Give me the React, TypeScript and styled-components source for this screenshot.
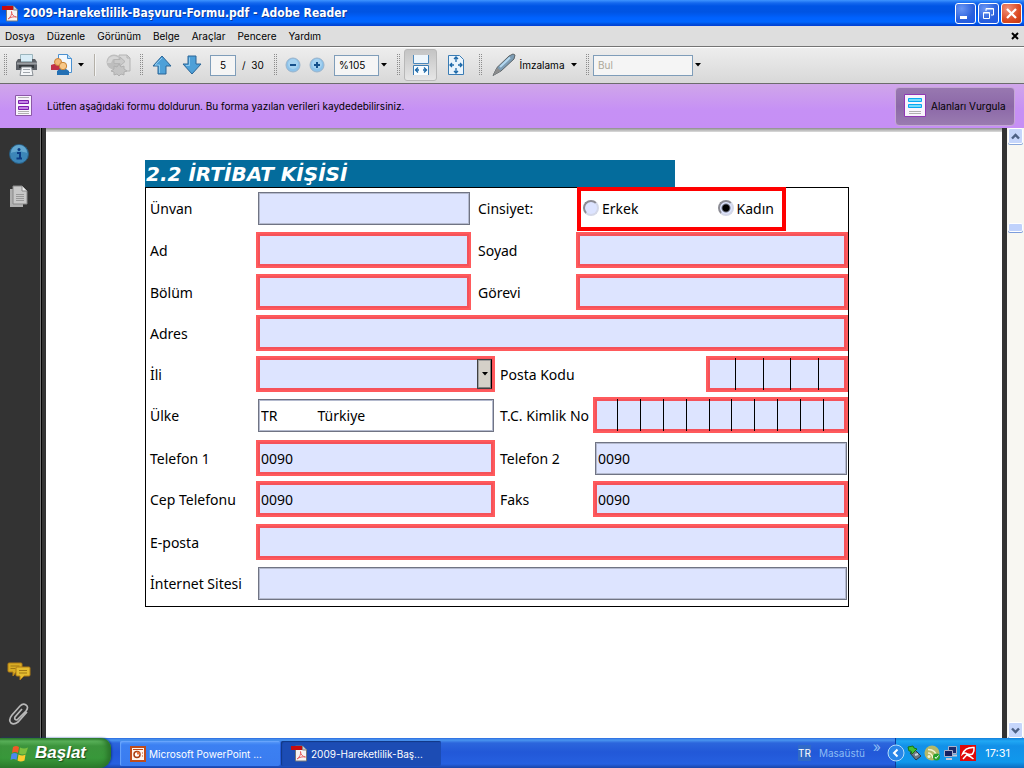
import React from "react";
import styled, { createGlobalStyle, css } from "styled-components";

const uiFont = `Inter, "DejaVu Sans Condensed", sans-serif`;
const captionFont = `"DejaVu Sans Condensed", "DejaVu Sans", sans-serif`;
const formFont = `"Noto Sans", "Open Sans", sans-serif`;

const GlobalStyle = createGlobalStyle`
  *, *::before, *::after { box-sizing: border-box; }
  body { margin: 0; background: #333; font-family: ${uiFont}; font-size: 10px; color: #000; }
  button, input, select { font: inherit; color: inherit; margin: 0; }
  button { padding: 0; border: 0; background: none; }
  svg { display: block; flex: none; }
`;

const Window = styled.div`
  display: flex;
  flex-direction: column;
  min-height: 100vh;
`;

/* ---------- title bar ---------- */
const TitleBar = styled.header`
  display: flex;
  align-items: center;
  height: 26px;
  padding: 0 2px;
  background: linear-gradient(#3f95ff 0, #1468ee 3px, #0055e5 6px, #0054e3 12px, #0062ff 18px, #0066ff 22px, #0050dc 24px, #003dd7 26px);
`;
const WindowTitle = styled.h1`
  flex: 1;
  margin: 0 0 0 4px;
  font-family: ${captionFont};
  font-size: 12px;
  line-height: 16px;
  font-weight: bold;
  color: #fff;
  text-shadow: 1px 1px 0 #0a3a9a;
`;
const CaptionButtons = styled.div`
  display: flex;
  gap: 2px;
`;
const CaptionButton = styled.button<{ $close?: boolean }>`
  display: grid;
  place-items: center;
  width: 21px;
  height: 21px;
  border: 1px solid #fff;
  border-radius: 3px;
  background: ${(p) =>
    p.$close
      ? "radial-gradient(circle at 30% 25%, #f0907a, #dc4a22 60%, #c03610)"
      : "radial-gradient(circle at 30% 25%, #6a96f4, #2a60dc 60%, #1c58e8)"};
`;

/* ---------- menu ---------- */
const MenuBar = styled.nav`
  display: flex;
  align-items: center;
  gap: 12px;
  height: 20px;
  padding: 0 5px;
  background: #dedede;
`;
const MenuItem = styled.button`
  line-height: 16px;
`;
const CloseDocument = styled.button`
  margin-left: auto;
`;

/* ---------- toolbar ---------- */
const ToolBar = styled.div`
  display: flex;
  align-items: center;
  height: 38px;
  border-top: 1px solid #747474;
  border-bottom: 1px solid #6c6c6c;
  box-shadow: inset 0 1px 0 #fff;
  background: linear-gradient(#eee, #d8d8d8);
`;
const Grip = styled.span`
  width: 3px;
  height: 22px;
  margin: 0 4px;
  background: conic-gradient(transparent 270deg, #8c8c8c 0) 0 0 / 2px 2px;
`;
const Separator = styled.span`
  width: 2px;
  height: 22px;
  margin: 0 4px 0 3px;
  border-left: 1px solid #b4b0a8;
  border-right: 1px solid #f4f4f4;
`;
const ToolButton = styled.button<{ $w: number; $pressed?: boolean }>`
  display: flex;
  align-items: center;
  justify-content: center;
  gap: 4px;
  width: ${(p) => p.$w}px;
  height: 32px;
  ${(p) =>
    p.$pressed &&
    css`
      border: 1px solid #b8b8b8;
      border-radius: 3px;
      background: linear-gradient(#c4c4c4, #e6e6e6);
    `}
`;
const ToolInput = styled.input<{ $w: number; $align?: string }>`
  width: ${(p) => p.$w}px;
  height: 21px;
  padding: 0 4px;
  border: 1px solid #7f9db9;
  background: #f5f5f5;
  text-align: ${(p) => p.$align || "center"};
  &::placeholder { color: #aca899; opacity: 1; }
`;
const PageBox = styled.label`
  display: flex;
  align-items: center;
  gap: 6px;
  width: 63px;
  padding-left: 3px;
  white-space: nowrap;
`;
const ZoomBox = styled.div`
  display: flex;
  align-items: center;
  width: 64px;
  padding-left: 5px;
`;
const SignLabel = styled.span`
  margin-right: 2px;
`;

/* ---------- message bar ---------- */
const MessageBar = styled.section`
  display: flex;
  align-items: center;
  gap: 12px;
  height: 44px;
  padding: 0 9px 0 13px;
  background: linear-gradient(#d0a6ea, #c690f5 60%, #c68ff5);
`;
const Message = styled.p`
  flex: 1;
  margin: 0;
  line-height: 16px;
`;
const HighlightButton = styled.button`
  display: flex;
  align-items: center;
  gap: 5px;
  width: 120px;
  height: 39px;
  padding-left: 8px;
  border: 1px solid #c4a8d4;
  border-radius: 4px;
  background: linear-gradient(#9878b0, #8c68a8 50%, #9a7cb0);
  white-space: nowrap;
`;

/* ---------- work area ---------- */
const WorkArea = styled.div`
  display: flex;
  flex: 1;
`;
const SideBar = styled.aside`
  display: flex;
  flex-direction: column;
  align-items: center;
  gap: 20px;
  width: 46px;
  padding: 15px 8px 12px 0;
  background: linear-gradient(90deg, #333 40px, #777 40px 41px, #000 41px 42px, #333 42px);
`;
const SideButton = styled.button<{ $push?: boolean }>`
  margin-top: ${(p) => (p.$push ? "auto" : "0")};
`;
const Page = styled.main`
  flex: 1;
  padding: 32px 153px 32px 99px;
  background: linear-gradient(#8c8c8c, #b8b8b8 2px, #dcdcdc 4px, #fff 4px);
`;
const ScrollBar = styled.div`
  display: flex;
  flex-direction: column;
  width: 22px;
  border-left: 5px solid #333;
  padding: 0 1px;
  background: #f8f7f2;
`;
const ScrollButton = styled.button`
  display: grid;
  place-items: center;
  width: 15px;
  height: 16px;
  border: 1px solid #fff;
  border-radius: 2px;
  background: #c6d6fb;
  box-shadow: 0 1px 0 #8aa8dc;
`;
const ScrollTrack = styled.div`
  flex: 1;
  padding-top: 79px;
`;
const ScrollThumb = styled.div`
  width: 15px;
  height: 9px;
  border: 1px solid #fff;
  border-radius: 2px;
  background: #c0d2fc;
  box-shadow: 0 1px 0 #7c9cdc;
`;

/* ---------- form ---------- */
const SectionTitle = styled.h2`
  width: 75.3%;
  height: 27px;
  margin: 0;
  padding-left: 1px;
  background: #046c9c;
  color: #fff;
  font: italic bold 20px/28px "DejaVu Sans", sans-serif;
  white-space: nowrap;
`;
const Form = styled.form`
  display: grid;
  grid-template-rows: 42px 42px 41px 41px 41px 43px 41px 43px 41px 43px;
  border: 1px solid #000;
  font-family: ${formFont};
  font-size: 14px;
`;
const columns = {
  narrow: "110px 215fr 105px 272fr",
  even: "110px 239fr 98px 255fr",
  wide: "110px 1fr",
};
const Row = styled.div<{ $cols: keyof typeof columns }>`
  display: grid;
  grid-template-columns: ${(p) => columns[p.$cols]};
  padding-top: 2px;
  align-items: start;
`;
const Label = styled.label<{ $pad?: number }>`
  padding-left: ${(p) => p.$pad || 4}px;
  line-height: 38px;
  white-space: nowrap;
`;
const required = css`
  height: 36px;
  margin: 0;
  border: 2px solid #ff5a5c;
  box-shadow: inset 0 0 0 2px #f5525a;
  padding: 0 3px;
  width: 100%;
`;
const optional = css`
  height: 33px;
  margin: 2px 0 0 2px;
  border: 1px solid #707484;
  box-shadow: inset 0 0 0 1px #b4bace;
  padding: 0 2px;
  width: calc(100% - 3px);
`;
const Field = styled.input<{ $optional?: boolean; $white?: boolean }>`
  border-radius: 0;
  outline: none;
  ${(p) => (p.$optional ? optional : required)}
  background: ${(p) => (p.$white ? "#fff" : "#dde4ff")};
`;
const Over = styled.div`
  position: relative;
`;
const CombHolder = styled.div<{ $w?: string }>`
  position: relative;
  justify-self: end;
  width: ${(p) => p.$w || "100%"};
`;
const CombLines = styled.div`
  position: absolute;
  inset: 2px;
  display: flex;
  pointer-events: none;
`;
const CombCell = styled.span`
  flex: 1;
  & + & { border-left: 1px solid #000; }
`;
const ListField = styled.select`
  ${required}
  display: block;
  appearance: none;
  border-radius: 0;
  background: #dde4ff;
`;
const DropMark = styled.span`
  position: absolute;
  top: 3px;
  right: 3px;
  display: grid;
  place-items: center;
  width: 15px;
  height: 30px;
  border: 1px solid;
  border-color: #404040 #000 #404040 #404040;
  box-shadow: inset -1px -1px 0 #808080, inset 1px 1px 0 #a0a0a0;
  background: #d4d0c8;
  pointer-events: none;
`;
const GenderBox = styled.fieldset`
  display: flex;
  justify-content: space-between;
  width: 209px;
  height: 44px;
  margin: -3px 0 0 1px;
  padding: 0 8px 2px 2px;
  border: 4px solid #f00;
`;
const Choice = styled.label`
  display: flex;
  align-items: center;
  gap: 3px;
`;
const Radio = styled.input`
  appearance: none;
  width: 16px;
  height: 16px;
  border: 2px solid;
  border-color: #8c8c94 #d4d8e8 #d4d8e8 #8c8c94;
  border-radius: 50%;
  background: #dde4ff;
  &:checked { background: radial-gradient(circle, #000 3px, #dde4ff 5px); }
`;

/* ---------- task bar ---------- */
const TaskBar = styled.footer`
  display: flex;
  height: 30px;
  background: linear-gradient(#2a6ae0 0, #4a96f0 2px, #2c66dc 5px, #2258d8 14px, #2660e0 26px, #1a44a8 30px);
  color: #fff;
`;
const StartButton = styled.button`
  display: flex;
  align-items: center;
  gap: 5px;
  width: 111px;
  padding-left: 10px;
  border-radius: 0 10px 12px 0;
  background: linear-gradient(#2c7c2c, #5cb45c 3px, #3c943c 8px, #38983a 20px, #2c7c2c 30px);
  box-shadow: inset -4px 0 5px #2a742a, 1px 0 2px #123c9c;
  font: italic bold 17px/24px "Liberation Sans", sans-serif;
  color: #fff;
  text-shadow: 1px 1px 1px #1a4a1a;
`;
const Tasks = styled.div`
  display: flex;
  flex: 1;
  gap: 1px;
  padding: 3px 0 2px 9px;
`;
const Task = styled.button<{ $active?: boolean }>`
  display: flex;
  align-items: center;
  gap: 3px;
  width: 160px;
  padding-left: 10px;
  border-radius: 2px;
  background: ${(p) => (p.$active ? "#1c4cb4" : "linear-gradient(#5a9cfa, #3c80f2 4px, #3a7cf0)")};
  box-shadow: inset 1px 1px 1px ${(p) => (p.$active ? "#123884" : "#6aa6fc")};
  color: #fff;
  white-space: nowrap;
`;
const Desk = styled.div`
  display: flex;
  align-items: center;
  gap: 8px;
  padding-right: 14px;
  color: #8cbcf4;
`;
const Lang = styled.span`
  background: #316ac5;
  color: #fff;
  line-height: 16px;
`;
const More = styled.span`
  align-self: flex-start;
  font-size: 14px;
  line-height: 18px;
`;
const Tray = styled.div`
  display: flex;
  align-items: center;
  gap: 2px;
  width: 129px;
  padding-right: 14px;
  border-left: 1px solid #0c3c9c;
  background: linear-gradient(#1480dc, #20a8f4 3px, #1290e8 8px, #1098ec 24px, #0c6cc0 30px);
`;
const TrayToggle = styled.button`
  margin-left: -9px;
`;
const Clock = styled.time`
  margin-left: auto;
  font-size: 11px;
  white-space: nowrap;
`;

/* ---------- drawings ---------- */
const Caret = () => (
  <svg width="6" height="4" viewBox="0 0 6 4"><path d="M0 0h6L3 3.500z" fill="#000" /></svg>
);
const PdfIcon = () => (
  <svg width="17" height="17" viewBox="0 0 17 17">
    <path d="M4.500 1h7l4 4v11h-11z" fill="#f6f4f4" stroke="#777" />
    <path d="M11.500 1v4h4" fill="#ccc" stroke="#888" />
    <path d="M0 1h11v4H0z" fill="#c80c0c" />
    <path d="M6 14c3-2 4-5 3.500-7.500 0 3 2 5 5 5.500-3-.500-6 0-8.500 2z" fill="none" stroke="#e86060" />
  </svg>
);
const PrintIcon = () => (
  <svg width="24" height="24" viewBox="0 0 24 24">
    <path d="M5.500 1.500h12v7h-12z" fill="#d8ecf6" stroke="#9ab4bc" />
    <path d="M3 6h3v3h11V6h3l2 3v8H1V9z" fill="#5c6066" />
    <path d="M2 9.500h20v2H2z" fill="#9a9ea2" />
    <path d="M4 12h15v3H4z" fill="#34383c" />
    <path d="M6.500 14h10l1.500 8.500H5z" fill="#f4f6f8" stroke="#8a9096" />
    <path d="M8 16.500h7M8 19.500h7" stroke="#a0a6ac" />
  </svg>
);
const ShareIcon = () => (
  <svg width="24" height="24" viewBox="0 0 24 24">
    <path d="M8.500 1.500h9l4 4v14h-13z" fill="#f2f8fe" stroke="#4a90d0" />
    <path d="M17.500 1.500v4h4" fill="#b8dcf4" stroke="#4a90d0" />
    <path d="M1 17v-5l3-1h6l2 1v5z" fill="#c03048" />
    <circle cx="8" cy="9" r="3.500" fill="#f2b878" stroke="#c88438" />
    <path d="M7 22v-4l3-2h6l3 2v4z" fill="#2470b4" />
    <circle cx="13" cy="13" r="3.700" fill="#f8c888" stroke="#c88438" />
  </svg>
);
const CollabIcon = () => (
  <svg width="27" height="24" viewBox="0 0 27 24">
    <path d="M14 2h8l3 3v13H14z" fill="#d8d8d8" stroke="#b4b4b4" />
    <path d="M22 2v3h3" fill="none" stroke="#b4b4b4" />
    <circle cx="9" cy="9" r="7.500" fill="#bebebe" />
    <path d="M4 5q5-4 10 0l-2 2-4-1-2 4-4 0z" fill="#d6d6d6" />
    <path d="M9 6.500h6V4l5 4.500-5 4.500v-2.500H9z" fill="#cacaca" stroke="#b4b4b4" />
    <path d="M14 11l2 3 3-1v3l3 2-3 1v3l-3-1-2 2-2-2-3 1v-3l-3-1 3-2v-3l3 1z" fill="#c4c4c4" stroke="#b0b0b0" />
  </svg>
);
const ArrowIcon = ({ down }: { down?: boolean }) => (
  <svg width="20" height="20" viewBox="0 0 20 20">
    <path
      d={down ? "M6 1h8v8h5l-9 10L1 9h5z" : "M6 19h8v-8h5L10 1 1 11h5z"}
      fill="#4ea0d8" stroke="#2a6496" strokeLinejoin="round"
    />
    <path d={down ? "M7.500 2.500v8H4" : "M10 3l-7 7h4.500v8"} fill="none" stroke="#90cbee" />
  </svg>
);
const RoundIcon = ({ plus }: { plus?: boolean }) => (
  <svg width="16" height="16" viewBox="0 0 16 16">
    <circle cx="8" cy="8" r="7" fill="#8cc2ea" stroke="#9ab4cc" />
    <circle cx="8" cy="7" r="5" fill="#a6d2f0" />
    <path d={plus ? "M5 8h6M8 5v6" : "M5 8h6"} stroke="#14508c" strokeWidth="2" />
  </svg>
);
const FitWidthIcon = () => (
  <svg width="18" height="22" viewBox="0 0 18 22">
    <path d="M1.500 1v8.500h15V1" fill="#eef6fc" stroke="#4a88bc" />
    <path d="M1.500 21v-9.500h15V21" fill="#f8fcff" stroke="#3a7cb4" />
    <path d="M3 16h4M11 16h4M6 13.500L3.500 16 6 18.500M12 13.500l2.500 2.500-2.500 2.500" fill="none" stroke="#1c68a8" strokeWidth="1.300" />
  </svg>
);
const FitPageIcon = () => (
  <svg width="18" height="22" viewBox="0 0 18 22">
    <path d="M1.500 1.500h11l4 4v15h-15z" fill="#eaf4fc" stroke="#3a7cb4" />
    <path d="M9 3v5M9 14v5M3 11h4M11 11h4M7 5l2-2 2 2M7 17l2 2 2-2M5 9l-2 2 2 2M13 9l2 2-2 2" fill="none" stroke="#1c68a8" strokeWidth="1.300" />
  </svg>
);
const PenIcon = () => (
  <svg width="24" height="24" viewBox="0 0 24 24">
    <path d="M1 22.500l4-8L17 3l4-2 2 1-1 4L9 18z" fill="#7c9cb4" stroke="#5c6468" />
    <path d="M8 14L18 4.500" stroke="#b4d8f0" strokeWidth="2" />
    <path d="M1 22.500l4-8 4 3.500z" fill="#8c8c8c" />
  </svg>
);
const FormIcon = ({ blue }: { blue?: boolean }) => (
  <svg width="22" height="24" viewBox="0 0 22 24">
    <path d={blue ? "M.5 .5h21v22H.5z" : "M2.500 1.500h16v20h-16z"} fill="#f8f4fc" stroke={blue ? "#9038b4" : "#8c58a8"} />
    <path d={blue ? "M4.500 4.500h13v3h-13zM4.500 10.500h13v3h-13z" : "M5.500 6.500h10v3h-10zM5.500 12.500h10v3h-10z"} fill={blue ? "#74dcfc" : "#c484e4"} stroke={blue ? "#08a8f0" : "#7c1cac"} />
    <path d={blue ? "M5 17.500h12M5 19.500h12" : "M5 3.500h11M5 17.500h11M5 19.500h11"} stroke="#b0b0b0" />
  </svg>
);
const InfoIcon = () => (
  <svg width="22" height="22" viewBox="0 0 22 22">
    <circle cx="11" cy="11" r="9.500" fill="#3c86b8" stroke="#285c80" />
    <path d="M3 10a8 8 0 0 1 16 0c-5-2-11-2-16 0z" fill="#64a8d0" />
    <path d="M9 10h3v5M8.500 15.500h5.500" fill="none" stroke="#0c3c84" strokeWidth="2" />
    <circle cx="11" cy="6.500" r="1.500" fill="#0c3c84" />
  </svg>
);
const PagesIcon = () => (
  <svg width="20" height="23" viewBox="0 0 20 23">
    <path d="M1 4h13v18H1z" fill="#b0b0b0" />
    <path d="M4 1h9l5 5v13H4z" fill="#c8c8c8" stroke="#888" />
    <path d="M13 1v5h5" fill="#eee" stroke="#888" />
    <path d="M7 9.500h8M7 11.500h8M7 13.500h8M7 15.500h8" stroke="#989898" />
  </svg>
);
const CommentsIcon = () => (
  <svg width="24" height="20" viewBox="0 0 24 20">
    <path d="M2 1h12q1 0 1 1v7q0 1-1 1H9l-3 4v-4H2q-1 0-1-1V2q0-1 1-1z" fill="#d8ac24" stroke="#b07c14" />
    <path d="M3.500 4h9M3.500 6.500h5" stroke="#a07814" />
    <path d="M10 5h12q1 0 1 1v7q0 1-1 1h-5l-4 4v-4h-3q-1 0-1-1V6q0-1 1-1z" fill="#e4bc30" stroke="#b07c14" />
    <path d="M12 8.500h8M12 11h8" stroke="#a07814" />
  </svg>
);
const ClipIcon = () => (
  <svg width="22" height="24" viewBox="0 0 22 24">
    <path d="M14 7l-7 8q-1 3 2 3l9-9q3-4 0-6-3-2-6 1L4 13q-4 5-1 8 3 2 7-1l9-10" fill="none" stroke="#b8b8b8" strokeWidth="1.700" />
  </svg>
);
const Chevron = ({ down }: { down?: boolean }) => (
  <svg width="9" height="7" viewBox="0 0 9 7">
    <path d={down ? "M1 1.500l3.500 3.500L8 1.500" : "M1 5.500L4.500 2 8 5.500"} fill="none" stroke="#4d6185" strokeWidth="2.400" />
  </svg>
);
const FlagIcon = () => (
  <svg width="20" height="19" viewBox="0 0 20 19">
    <path d="M3 3q3-2 6 0L8 9Q5 7 2 9z" fill="#f05a28" />
    <path d="M10 3.500q4 2 8 0l-2 6q-3 2-7 0z" fill="#7cc040" />
    <path d="M1.500 10q3-2 6 0l-1 6q-3-2-6 0z" fill="#4c88f0" />
    <path d="M8.500 10.500q4 2 7 0l-1 6q-4 2-7 0z" fill="#fccc30" />
  </svg>
);
const PptIcon = () => (
  <svg width="16" height="16" viewBox="0 0 16 16">
    <path d="M1 1h14v14H1z" fill="#fff4ec" stroke="#c04c1c" strokeWidth="2" />
    <circle cx="7" cy="8.500" r="3" fill="#fff" stroke="#a83c10" strokeWidth="1.500" />
    <path d="M7 8.500V5.500A3 3 0 0 1 10 8.500z" fill="#e8743c" />
    <path d="M12 7h1M12 10h1M3 3.500h10" stroke="#c04c1c" />
  </svg>
);
const TrayArrow = () => (
  <svg width="18" height="18" viewBox="0 0 18 18">
    <circle cx="9" cy="9" r="8" fill="#2a86e8" stroke="#b4dcfc" />
    <path d="M10.500 5.500L7 9l3.500 3.500" fill="none" stroke="#fff" strokeWidth="2" />
  </svg>
);
const UsbIcon = () => (
  <svg width="15" height="16" viewBox="0 0 15 16">
    <path d="M3 8l5-3 6 6-5 4z" fill="#6c7884" stroke="#2c3844" />
    <path d="M8 10l3-1" stroke="#d0d8e0" strokeWidth="2" />
    <path d="M1 2l5-1 1 2 3 1-5 5-1-3-2 0z" fill="#44c034" stroke="#187414" />
  </svg>
);
const SignalIcon = () => (
  <svg width="17" height="16" viewBox="0 0 17 16">
    <circle cx="8" cy="8" r="7.500" fill="#b4b868" />
    <path d="M4 8q4 0 5 5M4 4.500q8 0 9 8" fill="none" stroke="#f4f4d0" strokeWidth="1.500" />
    <circle cx="5" cy="11.500" r="1.500" fill="#f4f4d0" />
    <circle cx="12.500" cy="12" r="3.500" fill="#28a02c" />
    <path d="M11 12l1 1.500 2.500-3" fill="none" stroke="#fff" />
  </svg>
);
const NetworkIcon = () => (
  <svg width="15" height="16" viewBox="0 0 15 16">
    <path d="M5.500 1.500h8v7h-8z" fill="#1c2c6c" stroke="#a8b0cc" />
    <path d="M1.500 5.500h8v6h-8z" fill="#142060" stroke="#a8b0cc" />
    <path d="M3 14h6M10 10.500h4" stroke="#c4c8d8" strokeWidth="2" />
  </svg>
);
const AviraIcon = () => (
  <svg width="16" height="16" viewBox="0 0 16 16">
    <path d="M0 0h16v16H0z" fill="#e00808" />
    <path d="M14 2.500Q5 2 2.500 9q2.500-2 5 0 2.500 1 5 0 2-3 1.500-6.500zM7.500 9L3 14M7 10q3 1 6.500 4" fill="none" stroke="#fff" strokeWidth="1.500" />
  </svg>
);

const Comb = ({ id, cells, width }: { id: string; cells: number; width?: string }) => (
  <CombHolder $w={width}>
    <Field id={id} maxLength={cells} />
    <CombLines>
      {Array.from({ length: cells }, (_, i) => <CombCell key={i} />)}
    </CombLines>
  </CombHolder>
);

const menus = ["Dosya", "Düzenle", "Görünüm", "Belge", "Araçlar", "Pencere", "Yardım"];

export default function App() {
  return (
    <Window>
      <GlobalStyle />
      <TitleBar>
        <PdfIcon />
        <WindowTitle>2009-Hareketlilik-Başvuru-Formu.pdf - Adobe Reader</WindowTitle>
        <CaptionButtons>
          <CaptionButton aria-label="Simge durumuna küçült">
            <svg width="15" height="15" viewBox="0 0 15 15"><path d="M2 10h7v3H2z" fill="#fff" /></svg>
          </CaptionButton>
          <CaptionButton aria-label="Önceki boyut">
            <svg width="15" height="15" viewBox="0 0 15 15">
              <path d="M5 5V2.500h7.500V9H10M5 3h7.500M2.500 6.500h6v6h-6zM2.500 7h6" fill="none" stroke="#fff" />
            </svg>
          </CaptionButton>
          <CaptionButton $close aria-label="Kapat">
            <svg width="15" height="15" viewBox="0 0 15 15"><path d="M3 3l9 9M12 3l-9 9" stroke="#fff" strokeWidth="2.300" /></svg>
          </CaptionButton>
        </CaptionButtons>
      </TitleBar>

      <MenuBar>
        {menus.map((m) => <MenuItem key={m}>{m}</MenuItem>)}
        <CloseDocument aria-label="Belgeyi kapat">
          <svg width="8" height="8" viewBox="0 0 8 8"><path d="M1 1l6 6M7 1L1 7" stroke="#000" strokeWidth="2" /></svg>
        </CloseDocument>
      </MenuBar>

      <ToolBar>
        <Grip />
        <ToolButton $w={32} aria-label="Yazdır"><PrintIcon /></ToolButton>
        <ToolButton $w={48} aria-label="Paylaş"><ShareIcon /><Caret /></ToolButton>
        <Separator />
        <ToolButton $w={36} disabled aria-label="Ortak çalışma"><CollabIcon /></ToolButton>
        <Grip />
        <ToolButton $w={30} aria-label="Önceki sayfa"><ArrowIcon /></ToolButton>
        <ToolButton $w={30} aria-label="Sonraki sayfa"><ArrowIcon down /></ToolButton>
        <PageBox>
          <ToolInput $w={26} defaultValue="5" />/ &nbsp;30
        </PageBox>
        <Grip />
        <ToolButton $w={24} aria-label="Uzaklaştır"><RoundIcon /></ToolButton>
        <ToolButton $w={24} aria-label="Yakınlaştır"><RoundIcon plus /></ToolButton>
        <ZoomBox>
          <ToolInput $w={45} $align="left" defaultValue="%105" aria-label="Yakınlaştırma" />
          <ToolButton $w={10} aria-label="Yakınlaştırma seçenekleri"><Caret /></ToolButton>
        </ZoomBox>
        <Grip />
        <ToolButton $w={33} $pressed aria-label="Genişliğe sığdır"><FitWidthIcon /></ToolButton>
        <ToolButton $w={38} aria-label="Sayfaya sığdır"><FitPageIcon /></ToolButton>
        <Grip />
        <ToolButton $w={96}><PenIcon /><SignLabel>İmzalama</SignLabel><Caret /></ToolButton>
        <Grip />
        <ToolInput $w={100} $align="left" placeholder="Bul" aria-label="Bul" />
        <ToolButton $w={10} aria-label="Bul seçenekleri"><Caret /></ToolButton>
      </ToolBar>

      <MessageBar>
        <FormIcon />
        <Message>Lütfen aşağıdaki formu doldurun. Bu forma yazılan verileri kaydedebilirsiniz.</Message>
        <HighlightButton><FormIcon blue />Alanları Vurgula</HighlightButton>
      </MessageBar>

      <WorkArea>
        <SideBar>
          <SideButton aria-label="Bilgi"><InfoIcon /></SideButton>
          <SideButton aria-label="Sayfalar"><PagesIcon /></SideButton>
          <SideButton $push aria-label="Yorumlar"><CommentsIcon /></SideButton>
          <SideButton aria-label="Ekler"><ClipIcon /></SideButton>
        </SideBar>

        <Page>
          <SectionTitle>2.2 İRTİBAT KİŞİSİ</SectionTitle>
          <Form>
            <Row $cols="narrow">
              <Label htmlFor="unvan">Ünvan</Label>
              <Field id="unvan" $optional />
              <Label as="span" $pad={7}>Cinsiyet:</Label>
              <GenderBox aria-label="Cinsiyet">
                <Choice><Radio type="radio" name="cinsiyet" />Erkek</Choice>
                <Choice><Radio type="radio" name="cinsiyet" defaultChecked />Kadın</Choice>
              </GenderBox>
            </Row>
            <Row $cols="narrow">
              <Label htmlFor="ad">Ad</Label>
              <Field id="ad" />
              <Label htmlFor="soyad" $pad={7}>Soyad</Label>
              <Field id="soyad" />
            </Row>
            <Row $cols="narrow">
              <Label htmlFor="bolum">Bölüm</Label>
              <Field id="bolum" />
              <Label htmlFor="gorevi" $pad={7}>Görevi</Label>
              <Field id="gorevi" />
            </Row>
            <Row $cols="wide">
              <Label htmlFor="adres">Adres</Label>
              <Field id="adres" />
            </Row>
            <Row $cols="even">
              <Label htmlFor="ili">İli</Label>
              <Over>
                <ListField id="ili"><option></option></ListField>
                <DropMark><Caret /></DropMark>
              </Over>
              <Label htmlFor="posta" $pad={5}>Posta Kodu</Label>
              <Comb id="posta" cells={5} width="142px" />
            </Row>
            <Row $cols="even">
              <Label htmlFor="ulke">Ülke</Label>
              <Field id="ulke" $optional $white readOnly value={"TR" + " ".repeat(11) + "Türkiye"} />
              <Label htmlFor="kimlik" $pad={5}>T.C. Kimlik No</Label>
              <Comb id="kimlik" cells={11} />
            </Row>
            <Row $cols="even">
              <Label htmlFor="tel1">Telefon 1</Label>
              <Field id="tel1" defaultValue="0090" />
              <Label htmlFor="tel2" $pad={5}>Telefon 2</Label>
              <Field id="tel2" $optional defaultValue="0090" />
            </Row>
            <Row $cols="even">
              <Label htmlFor="cep">Cep Telefonu</Label>
              <Field id="cep" defaultValue="0090" />
              <Label htmlFor="faks" $pad={5}>Faks</Label>
              <Field id="faks" defaultValue="0090" />
            </Row>
            <Row $cols="wide">
              <Label htmlFor="eposta">E-posta</Label>
              <Field id="eposta" />
            </Row>
            <Row $cols="wide">
              <Label htmlFor="site">İnternet Sitesi</Label>
              <Field id="site" $optional />
            </Row>
          </Form>
        </Page>

        <ScrollBar>
          <ScrollButton aria-label="Yukarı"><Chevron /></ScrollButton>
          <ScrollTrack><ScrollThumb /></ScrollTrack>
          <ScrollButton aria-label="Aşağı"><Chevron down /></ScrollButton>
        </ScrollBar>
      </WorkArea>

      <TaskBar>
        <StartButton><FlagIcon />Başlat</StartButton>
        <Tasks>
          <Task><PptIcon />Microsoft PowerPoint ...</Task>
          <Task $active><PdfIcon />2009-Hareketlilik-Baş...</Task>
        </Tasks>
        <Desk>
          <Lang>TR</Lang>
          <span>Masaüstü</span>
          <More>»</More>
        </Desk>
        <Tray>
          <TrayToggle aria-label="Gizli simgeleri göster"><TrayArrow /></TrayToggle>
          <UsbIcon />
          <SignalIcon />
          <NetworkIcon />
          <AviraIcon />
          <Clock>17:31</Clock>
        </Tray>
      </TaskBar>
    </Window>
  );
}
